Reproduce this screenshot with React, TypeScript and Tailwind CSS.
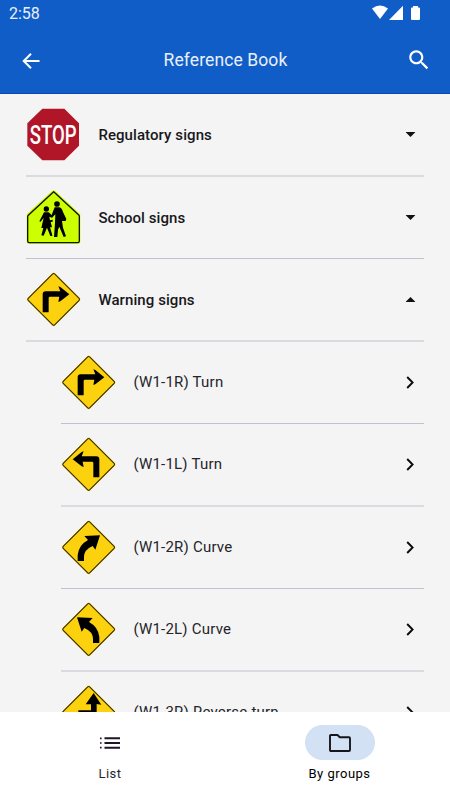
import { useState } from "react";
import type { ReactNode } from "react";

type SignKind = "stop" | "school" | "turnR" | "turnL" | "curveR" | "curveL" | "reverseR";

const TURN = "M48 120 V66 Q48 57 57 57 H101 L95 42 L101 44 L128 66 L101 87 L95 89 L98 73 H70 Q66 73 66 77 V120 Z";
const CURVE = "M48 122 V104 Q51 74 79 59 L68 47 L115 45 L101 88 L93 77 Q67 88 67 110 V122 Z";
const REVERSE = "M50 128 V75 H88 V57 H72 L96 23 L119 58 L105 56 V92 H67 V128 Z";

const GROUPS: { sign: SignKind; title: string }[] = [
    { sign: "stop", title: "Regulatory signs" },
    { sign: "school", title: "School signs" },
    { sign: "turnR", title: "Warning signs" },
];

const WARNING_SIGNS: { sign: SignKind; title: string }[] = [
    { sign: "turnR", title: "(W1-1R) Turn" },
    { sign: "turnL", title: "(W1-1L) Turn" },
    { sign: "curveR", title: "(W1-2R) Curve" },
    { sign: "curveL", title: "(W1-2L) Curve" },
    { sign: "reverseR", title: "(W1-3R) Reverse turn" },
];

function Diamond({ path, flip }: { path: string; flip?: boolean }) {
    return (
        <>
            <rect x="22.5" y="22.5" width="117" height="117" rx="6" fill="#fcd20f" transform="rotate(45 81 81)" />
            <rect x="25" y="25" width="112" height="112" rx="4" fill="none" stroke="#2b2400" strokeWidth="3" transform="rotate(45 81 81)" />
            <path d={path} fill="#000" transform={flip ? "translate(161 0) scale(-1 1)" : undefined} />
        </>
    );
}

function SchoolSign() {
    return (
        <>
            <path d="M81 0 Q84 0 87 3 L158 69 Q161 72 161 76 V154 Q161 161 154 161 H7 Q0 161 0 154 V76 Q0 72 3 69 L75 3 Q78 0 81 0 Z" fill="#ccff00" />
            <path d="M81 4 L157 75 Q158 77 158 79 V152 Q158 157 153 157 H8 Q3 157 3 152 V79 Q3 77 5 75 Z" fill="none" stroke="#111" strokeWidth="4" strokeLinejoin="round" />
            {/* child */}
            <circle cx="59" cy="56" r="8" />
            <path d="M52 66 H66 L78 77 L76 82 L68 79 L70 90 L78 88 V94 L72 95 L76 111 H70 L76 131 L77 137 H71 L61 112 L51 136 L44 135 L50 113 H44 L51 82 L42 94 L38 93 Z" />
            {/* adult */}
            <circle cx="91" cy="41" r="8.5" />
            <path d="M84 51 H98 Q106 53 109 65 L119 86 L117 92 H106 L109 112 L118 138 L111 140 L98 109 L94 118 L92 140 H82 L85 98 L86 72 L76 82 L74 76 Z" />
        </>
    );
}

function Sign({ kind }: { kind: SignKind }) {
    return (
        <svg viewBox="-2 -1 162 162" className="mb-px block h-[54px] w-[54px] shrink-0 overflow-visible">
            {kind === "stop" && (
                <>
                    <path d="M47 4 H113 L157 48 V115 L113 159 H47 L2 115 V48 Z" fill="#b01628" />
                    <text x="9" y="109" textLength="141" lengthAdjust="spacingAndGlyphs" fontSize="76" fill="#fff" className="font-['Roboto',sans-serif] font-medium">
                        STOP
                    </text>
                </>
            )}
            {kind === "school" && <SchoolSign />}
            {kind === "turnR" && <Diamond path={TURN} />}
            {kind === "turnL" && <Diamond path={TURN} flip />}
            {kind === "curveR" && <Diamond path={CURVE} />}
            {kind === "curveL" && <Diamond path={CURVE} flip />}
            {kind === "reverseR" && <Diamond path={REVERSE} />}
        </svg>
    );
}

function Divider({ thick }: { thick: boolean }) {
    return <div className={thick ? "h-[2px] bg-[#dadae1]" : "h-px bg-[#c0c0cf]"} />;
}

function Row({ sign, label, thick, children }: { sign: SignKind; label: ReactNode; thick: boolean; children: ReactNode }) {
    return (
        <>
            <div className="flex h-[81px] items-center pl-[0.4px]">
                <Sign kind={sign} />
                {label}
                <div className="ml-auto flex w-7 justify-center">{children}</div>
            </div>
            <Divider thick={thick} />
        </>
    );
}

function StatusBar() {
    return (
        <div className="flex h-7 items-center justify-between pl-[9px] pr-[30px]">
            <span className="text-[16px] leading-7 text-[#e9f0fb]">2:58</span>
            <svg viewBox="0 0 48 16" className="mb-0.5 h-4 w-12" fill="#fff">
                <path d="M0 3.6 Q8 -2.4 16 3.6 L8 14 Z" />
                <path d="M31 .8 V15 H17 Z" />
                <path d="M41 1 H46 V2.4 H47 Q48 2.4 48 3.4 V14 Q48 15 47 15 H40 Q39 15 39 14 V3.4 Q39 2.4 40 2.4 H41 Z" />
            </svg>
        </div>
    );
}

export default function App() {
    const [open, setOpen] = useState(2);
    const [tab, setTab] = useState("groups");

    return (
        <div className="flex h-screen w-full flex-col overflow-hidden bg-[#f4f4f4] font-['Roboto',sans-serif] text-[#0b0b0f]">
            <header className="h-[94px] shrink-0 border-b border-[#0a49b4] bg-[#105dc7] text-white">
                <StatusBar />
                <div className="flex h-[65px] items-center justify-between pl-[19px] pr-[18px]">
                    <button aria-label="Back">
                        <svg viewBox="0 0 24 24" className="block h-6 w-6" fill="currentColor">
                            <path d="M20.5 11H7.2l5.5-5.6L11.3 4 3.3 12l8 8 1.4-1.4L7.2 13h13.3z" />
                        </svg>
                    </button>
                    <h1 className="pl-0.5 text-[17.5px] font-normal tracking-[0.1px] text-[#e9f0fb]">Reference Book</h1>
                    <button aria-label="Search">
                        <svg viewBox="0 0 24 24" className="mb-px block h-[26px] w-[26px]" fill="currentColor">
                            <path d="M15.5 14h-.79l-.28-.27C15.41 12.59 16 11.11 16 9.5 16 5.91 13.09 3 9.5 3S3 5.91 3 9.5 5.91 16 9.5 16c1.61 0 3.09-.59 4.23-1.57l.27.28v.79l5 4.99L20.49 19l-4.99-5zm-6 0C7.01 14 5 11.99 5 9.5S7.01 5 9.5 5 14 7.01 14 9.5 11.99 14 9.5 14z" />
                        </svg>
                    </button>
                </div>
            </header>

            <main className="min-h-0 flex-1 overflow-hidden pl-[26px] pr-[26px]">
                {GROUPS.map((group, i) => (
                    <div key={group.title} onClick={() => setOpen(open === i ? -1 : i)}>
                        <Row
                            sign={group.sign}
                            thick={i % 2 === 0}
                            label={<span className="ml-[18px] pt-px text-[15px] font-medium tracking-[0.08px] text-[#18181b]">{group.title}</span>}
                        >
                            <svg viewBox="0 0 10 5" className="h-[5px] w-[10px] translate-x-[0.5px]" fill="#111">
                                <path d={open === i ? "M0 5 L5 0 L10 5 Z" : "M0 0 L5 5 L10 0 Z"} />
                            </svg>
                        </Row>
                    </div>
                ))}
                {open === 2 && (
                    <div className="pl-[35px]">
                        {WARNING_SIGNS.map((item, i) => (
                            <Row
                                key={item.title}
                                sign={item.sign}
                                thick={i % 2 === 1}
                                label={<span className="ml-[18px] text-[15px] tracking-[0.22px] text-[#25252a]">{item.title}</span>}
                            >
                                <svg viewBox="0 0 8 13" className="h-[13px] w-2" fill="none" stroke="#0b0b0f" strokeWidth="1.9">
                                    <path d="M1.2 1 L6.6 6.5 L1.2 12" />
                                </svg>
                            </Row>
                        ))}
                    </div>
                )}
            </main>

            <nav className="flex h-[88px] shrink-0 justify-between bg-white pl-[70px] pr-[70.5px] pt-[13px]">
                <button className="flex w-20 flex-col items-center" onClick={() => setTab("list")}>
                    <span className={`flex h-[35px] w-[70px] items-center justify-center rounded-full ${tab === "list" ? "bg-[#d2e1f4]" : ""}`}>
                        <svg viewBox="0 0 20 12" className="h-3 w-5" fill="#1d1626">
                            <path d="M0 .6h1.6v1.6H0zM0 5.2h1.6v1.6H0zM0 9.8h1.6v1.6H0zM4.5.3H20v2H4.5zM4.5 5H20v2H4.5zM4.5 9.7H20v2H4.5z" />
                        </svg>
                    </span>
                    <span className="mt-[5px] text-[13px] font-[450] leading-[18px] tracking-[0.5px] text-[#25252c]">List</span>
                </button>
                <button className="flex w-20 flex-col items-center" onClick={() => setTab("groups")}>
                    <span className={`flex h-[35px] w-[70px] items-center justify-center rounded-full ${tab === "groups" ? "bg-[#d2e1f4]" : ""}`}>
                        <svg viewBox="0 0 22 18" className="h-[18px] w-[22px]" fill="none" stroke="#15151d" strokeWidth="1.9" strokeLinejoin="round">
                            <path d="M2 1H8.5L10.8 3.2H20Q21 3.2 21 4.2V16Q21 17 20 17H2Q1 17 1 16V2Q1 1 2 1Z" />
                        </svg>
                    </span>
                    <span className="mt-[5px] whitespace-nowrap text-[13px] font-[450] leading-[18px] tracking-[0.5px] text-black">By groups</span>
                </button>
            </nav>
        </div>
    );
}
